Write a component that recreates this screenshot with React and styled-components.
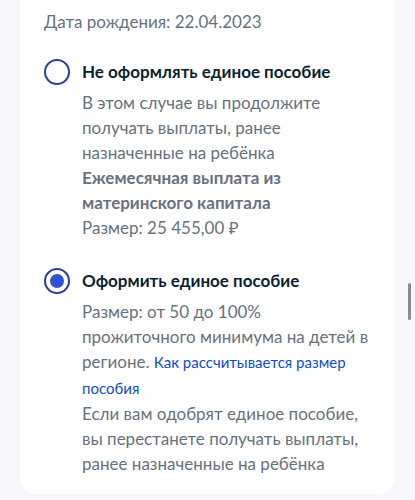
import React from 'react'
import styled, { createGlobalStyle } from 'styled-components'

const GlobalStyle = createGlobalStyle`
  html, body {
    margin: 0;
    padding: 0;
    background: #f5f7fb;
    font-family: Lato, "Noto Sans", sans-serif;
    -webkit-font-smoothing: antialiased;
  }
`

const Page = styled.div`
  position: relative;
  padding: 0 20px;
  height: 500px;
  overflow: hidden;
`

const Card = styled.section`
  background: #ffffff;
  border-radius: 0 0 16px 16px;
  padding: 10px 24px 18px 24px;
`

const BirthDate = styled.div`
  font-size: 17px;
  line-height: 24px;
  color: #66727f;
`

const Options = styled.div`
  display: flex;
  flex-direction: column;
  gap: 27px;
  margin-top: 24px;
`

const Option = styled.div`
  display: grid;
  grid-template-columns: 26px 1fr;
  column-gap: 12px;
`

const Radio = styled.span`
  box-sizing: border-box;
  width: 26px;
  height: 26px;
  margin-top: 1px;
  border-radius: 50%;
  border: 2px solid #2d3ea0;
  display: flex;
  align-items: center;
  justify-content: center;

  &::after {
    content: '';
    width: 14px;
    height: 14px;
    border-radius: 50%;
    background: #3150d3;
    display: ${p => (p.checked ? 'block' : 'none')};
  }
`

const Title = styled.div`
  font-size: 17px;
  line-height: 28px;
  font-weight: 700;
  color: #0b1f33;
  margin-bottom: 4px;
`

const Text = styled.p`
  margin: 0;
  font-size: 17px;
  line-height: 25px;
  color: #66727f;
  font-weight: ${p => (p.bold ? 700 : 400)};
`

const Link = styled.a`
  font-size: 15px;
  line-height: 25px;
  color: #0d4cd3;
  text-decoration: none;
`

const Scrollbar = styled.div`
  position: absolute;
  right: 4px;
  top: 283px;
  width: 3px;
  height: 37px;
  border-radius: 2px;
  background: #8a8a8a;
`

export default function App() {
  return (
    <>
      <GlobalStyle />
      <Page>
        <Card>
          <BirthDate>Дата рождения: 22.04.2023</BirthDate>
          <Options>
            <Option>
              <Radio />
              <div>
                <Title>Не оформлять единое пособие</Title>
                <Text>В этом случае вы продолжите получать выплаты, ранее назначенные на ребёнка</Text>
                <Text bold>Ежемесячная выплата из материнского капитала</Text>
                <Text>Размер: 25 455,00 ₽</Text>
              </div>
            </Option>
            <Option>
              <Radio checked />
              <div>
                <Title>Оформить единое пособие</Title>
                <Text>
                  Размер: от 50 до 100% прожиточного минимума на детей в регионе.{' '}
                  <Link href="#">Как рассчитывается размер пособия</Link>
                </Text>
                <Text>Если вам одобрят единое пособие, вы перестанете получать выплаты, ранее назначенные на ребёнка</Text>
              </div>
            </Option>
          </Options>
        </Card>
        <Scrollbar />
      </Page>
    </>
  )
}
